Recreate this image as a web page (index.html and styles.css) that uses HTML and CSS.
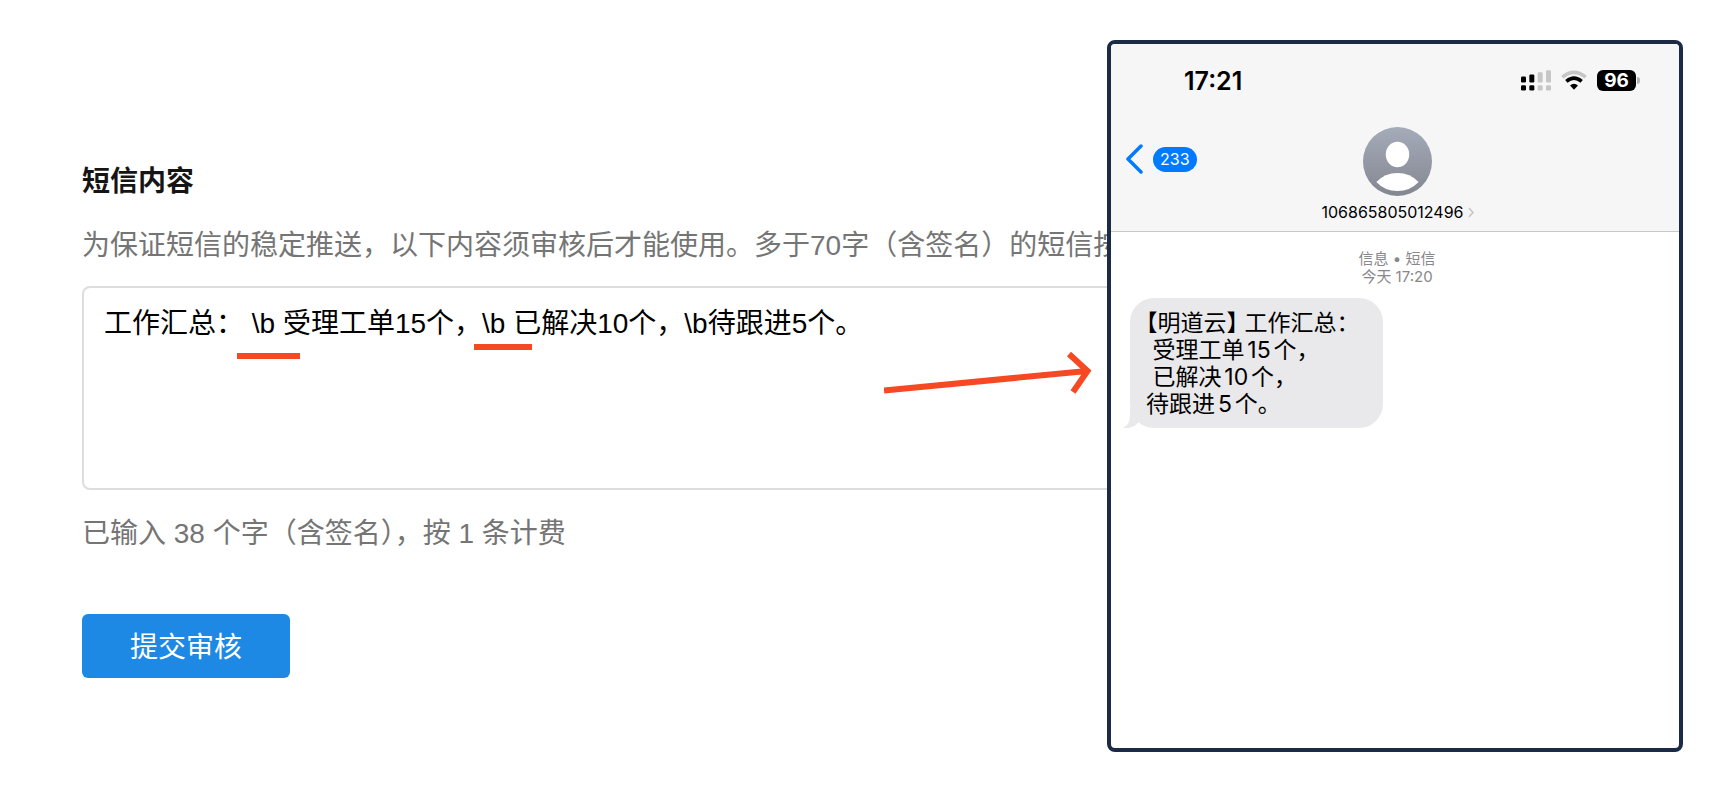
FILE: index.html
```html
<!DOCTYPE html>
<html lang="zh-CN">
<head>
<meta charset="utf-8">
<title>短信内容</title>
<link rel="stylesheet" href="styles.css">
</head>
<body>
<main class="page">
  <form class="sms-form">
    <label class="title" for="content">短信内容</label>
    <p class="hint">为保证短信的稳定推送，以下内容须审核后才能使用。多于70字（含签名）的短信按</p>
    <div class="editor">
      <textarea id="content" class="content" spellcheck="false">工作汇总： \b 受理工单15个，\b 已解决10个，\b待跟进5个。</textarea>
      <span class="mark mark-first"></span>
      <span class="mark mark-second"></span>
      <svg class="arrow" viewBox="0 0 210 46" fill="none" stroke="#f54823" stroke-width="6" aria-hidden="true">
        <path d="M0 40.500L203 21M185 4L203.500 21L189 42"/>
      </svg>
    </div>
    <p class="count">已输入 38 个字（含签名），按 1 条计费</p>
    <button class="submit" type="button">提交审核</button>
  </form>

  <section class="phone">
    <header class="phone-head">
      <div class="status">
        <span class="time">17:21</span>
        <div class="status-icons">
          <svg class="signal" viewBox="0 0 90 62" aria-hidden="true">
            <g fill="#000"><rect y="19" width="15" height="18" rx="4"/><rect x="25" y="13" width="15" height="24" rx="4"/><rect y="45" width="15" height="16" rx="4"/><rect x="25" y="45" width="15" height="16" rx="4"/></g>
            <g fill="#c6c6c6"><rect x="50" y="6" width="15" height="31" rx="4"/><rect x="75" width="15" height="37" rx="4"/><rect x="50" y="45" width="15" height="16" rx="4"/><rect x="75" y="45" width="15" height="16" rx="4"/></g>
          </svg>
          <svg class="wifi" viewBox="0 0 78 62" fill="none" aria-hidden="true">
            <path d="M4 21Q39 -8 74 21" stroke="#c6c6c6" stroke-width="11"/>
            <path d="M16 33.500Q39 14 62 33.500" stroke="#000" stroke-width="11"/>
            <path d="M27 46Q39 36 51 46L39 59Z" fill="#000"/>
          </svg>
          <div class="battery"><span class="level">96</span><span class="cap"></span></div>
        </div>
      </div>
      <div class="nav">
        <button class="back" type="button" aria-label="返回">
          <svg class="back-icon" viewBox="0 0 17 30" fill="none" stroke="#007aff" stroke-width="3.500" stroke-linecap="round" stroke-linejoin="round" aria-hidden="true"><path d="M15 2L2 15L15 28"/></svg>
          <span class="unread">233</span>
        </button>
        <div class="contact">
          <svg class="avatar" viewBox="0 0 206 206" aria-hidden="true">
            <defs><linearGradient id="shade" x1="0" y1="0" x2="0" y2="1"><stop offset="0" stop-color="#a5abb9"/><stop offset="1" stop-color="#848791"/></linearGradient></defs>
            <circle cx="103" cy="103" r="103" fill="url(#shade)"/>
            <ellipse cx="103" cy="82" rx="35" ry="38" fill="#fff"/>
            <path d="M40 164Q65 137 103 137Q141 137 166 164Q141 191 103 191Q65 191 40 164Z" fill="#fff"/>
          </svg>
          <div class="number">106865805012496
            <svg class="chevron" viewBox="0 0 6 11" fill="none" stroke="#c4c4c6" stroke-width="1.500" aria-hidden="true"><path d="M1 1L5 5.500L1 10"/></svg>
          </div>
        </div>
      </div>
    </header>
    <div class="thread">
      <p class="meta">信息 • 短信<br>今天 17:20</p>
      <div class="bubble">
        <p class="message">【明道云】 工作汇总：
 受理工单15个，
 已解决10个，
待跟进5个。</p>
        <svg class="tail" viewBox="0 0 60 60" aria-hidden="true"><path d="M21 0V25Q21 50 0 59Q28 65 47 43L60 20Z" fill="#e9e9eb"/></svg>
      </div>
    </div>
  </section>
</main>
</body>
</html>
```
FILE: styles.css
```css
* {
  box-sizing: border-box;
}

body,
p {
  margin: 0;
}

body {
  background: #fff;
  font-family: "Liberation Sans", "Noto Sans CJK SC", sans-serif;
}

.page {
  display: flex;
  min-height: 100vh;
  padding: 40px;
}

/* Form */
.sms-form {
  flex: 1;
  min-width: 0;
  padding: 122px 0 0 42px;
  overflow: hidden;
  font-size: 28px;
  line-height: 40px;
  color: #757575;
}

.title {
  display: block;
  font-weight: 600;
  color: #151515;
}

.hint {
  margin-top: 24px;
  white-space: nowrap;
}

.editor {
  position: relative;
  margin: 20px -20px 24px 0;
}

.content {
  display: block;
  width: 100%;
  height: 204px;
  padding: 16px 20px;
  border: 2px solid #ddd;
  border-radius: 8px;
  outline: none;
  resize: none;
  background: #fff;
  font: inherit;
  color: #000;
}

.mark {
  position: absolute;
  height: 6px;
  background: #f54823;
}

.mark-first {
  left: 155px;
  top: 67px;
  width: 63px;
}

.mark-second {
  left: 392px;
  top: 58px;
  width: 58px;
}

.arrow {
  position: absolute;
  left: 802px;
  top: 64px;
  width: 210px;
  height: 46px;
}

.submit {
  display: block;
  margin-top: 60px;
  padding: 14px 48px 10px;
  border: 0;
  border-radius: 6px;
  background: #1e88e5;
  font: inherit;
  color: #fff;
}

/* Phone */
.phone {
  flex: 0 0 576px;
  border: 4px solid #1c2b45;
  border-radius: 8px;
  overflow: hidden;
  background: #fff;
  font-family: Inter, "Noto Sans CJK SC", sans-serif;
}

.phone-head {
  border-bottom: 1px solid #c8c8c8;
  background: #f6f6f6;
}

.status {
  display: flex;
  align-items: flex-start;
  justify-content: space-between;
  padding: 22px 39px 0 73px;
}

.time {
  font-size: 25px;
  font-weight: 600;
  line-height: 30px;
}

.status-icons {
  display: flex;
  align-items: center;
  gap: 10px;
  padding-top: 4px;
}

.signal {
  width: 30px;
  height: 21px;
}

.wifi {
  width: 26px;
  height: 21px;
}

.battery {
  display: flex;
  align-items: center;
  gap: 1px;
}

.level {
  width: 39px;
  border-radius: 6px;
  background: #000;
  font-size: 19px;
  font-weight: 700;
  line-height: 21px;
  text-align: center;
  color: #fff;
}

.cap {
  width: 3px;
  height: 7px;
  border-radius: 0 3px 3px 0;
  background: #b5b5b5;
}

.nav {
  display: grid;
  grid-template-columns: 1fr auto 1fr;
  padding: 31px 10px 9px 15px;
}

.back {
  display: flex;
  align-items: center;
  align-self: start;
  justify-self: start;
  gap: 10px;
  margin-top: 17px;
  padding: 0;
  border: 0;
  background: none;
  font: inherit;
}

.back-icon {
  width: 17px;
  height: 30px;
}

.unread {
  padding: 0 7px;
  border-radius: 13px;
  background: #007aff;
  font-size: 16px;
  line-height: 25px;
  color: #fff;
}

.contact {
  display: flex;
  flex-direction: column;
  align-items: center;
  gap: 6px;
}

.avatar {
  width: 69px;
  height: 69px;
}

.number {
  display: flex;
  align-items: center;
  gap: 4px;
  font-size: 16px;
  line-height: 20px;
}

.chevron {
  width: 6px;
  height: 11px;
}

.thread {
  padding: 18px 15px 0 19px;
}

.meta {
  margin-bottom: 12px;
  font-size: 15px;
  line-height: 18px;
  text-align: center;
  color: #88888c;
}

.bubble {
  position: relative;
  width: 253px;
  padding: 12px 16px 10px;
  border-radius: 24px;
  background: #e9e9eb;
}

.message {
  font-size: 23px;
  font-feature-settings: "halt";
  line-height: 27px;
  white-space: pre;
  text-autospace: normal;
}

.tail {
  position: absolute;
  left: -7px;
  bottom: 0;
  width: 20px;
  height: 20px;
}
```
